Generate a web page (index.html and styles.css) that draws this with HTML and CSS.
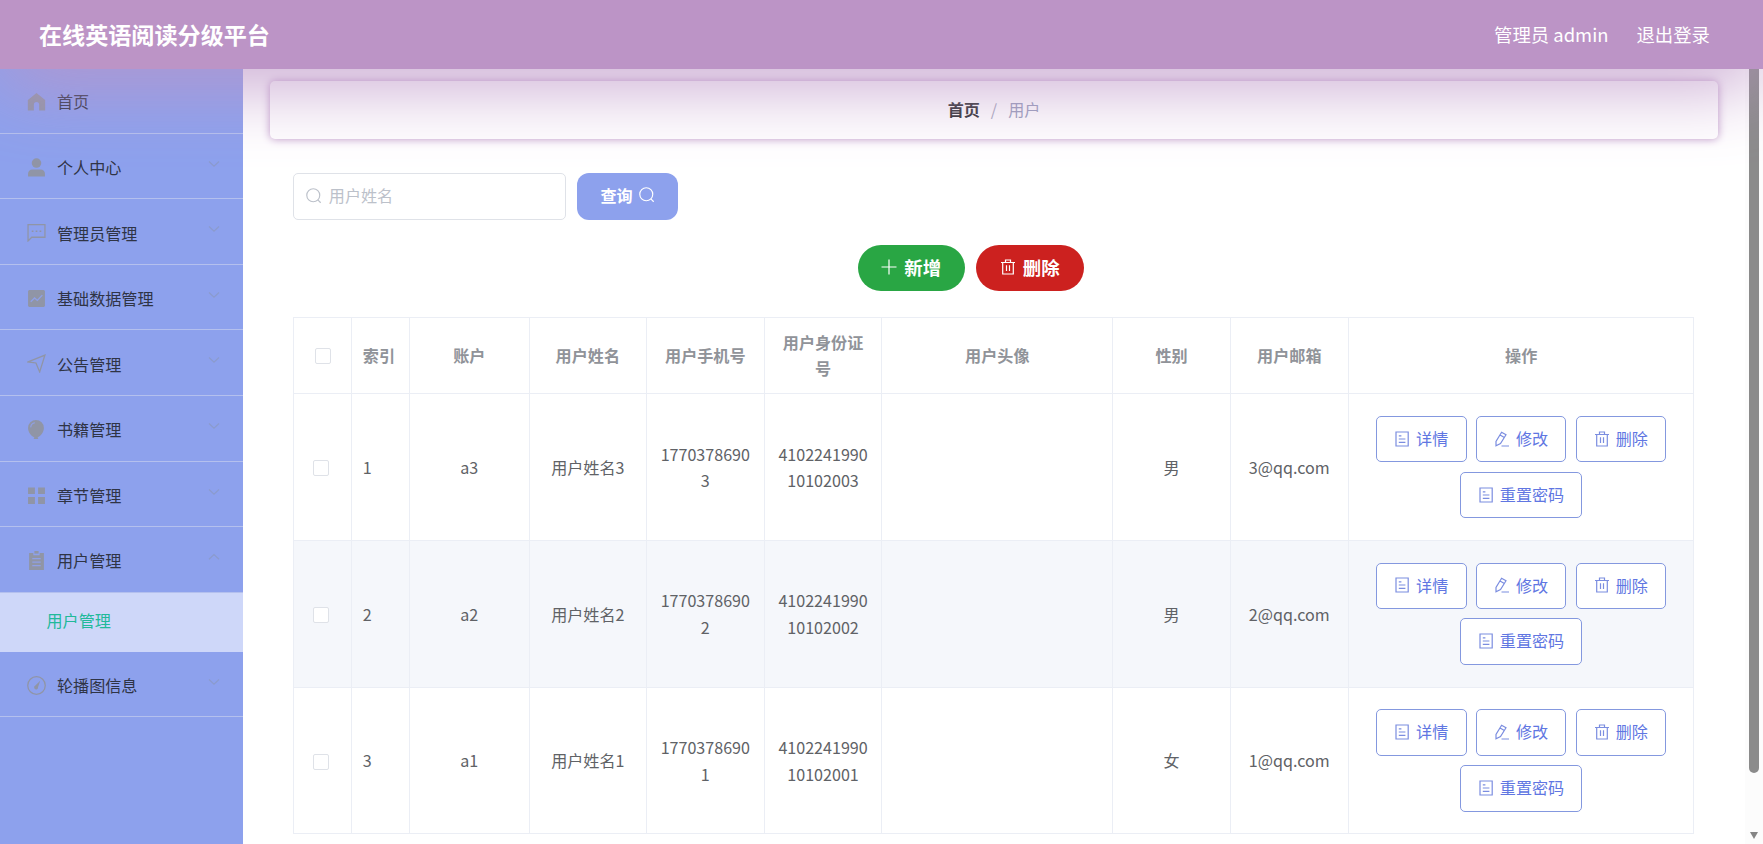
FILE: index.html
```html
<!DOCTYPE html>
<html lang="zh-CN">
<head>
<meta charset="utf-8">
<title>在线英语阅读分级平台</title>
<link rel="stylesheet" href="styles.css">
</head>
<body>
<svg width="0" height="0" class="sprite">
  <defs>
    <symbol id="home" viewBox="0 0 18 18"><path class="solid" d="M9 1 0.800 7.500v10h5.700V12a2.500 2.500 0 0 1 5 0v5.500h5.700v-10z"/></symbol>
    <symbol id="user" viewBox="0 0 18 18"><circle class="solid" cx="9" cy="4.800" r="4.500"/><path class="solid" d="M1 17.500V15a4 4 0 0 1 4-4h8a4 4 0 0 1 4 4v2.500z"/></symbol>
    <symbol id="chat" viewBox="0 0 18 18"><path class="line" d="M1 17V1.500h16v12H4.500z"/><path class="solid" d="M4.500 7h1.600v1.500H4.500zM8.200 7h1.600v1.500H8.200zM11.900 7h1.600v1.500h-1.600z"/></symbol>
    <symbol id="chart" viewBox="0 0 18 18"><path class="solid" d="M2 1h14l1 1v14l-1 1H2l-1-1V2z"/><path class="cut" d="m3.500 12 3.700-3.500 2.600 2.300 4.700-5"/></symbol>
    <symbol id="plane" viewBox="0 0 18 18"><path class="line" d="M1 7.500 17 1l-5 16-3.500-8.500z"/></symbol>
    <symbol id="balloon" viewBox="0 0 18 18"><path class="solid" d="M8.500 0a7.500 7.500 0 0 0-7.500 7.500c0 4 3 7.500 6 9L6.200 18h4.600l-.8-1.500c3-1.500 6-5 6-9A7.500 7.500 0 0 0 8.500 0z"/><path class="cut thin" d="M3.500 7a4.800 4.800 0 0 1 4-4.300"/></symbol>
    <symbol id="grid" viewBox="0 0 18 18"><path class="solid" d="M1 1.500h6.500v6H1zM10.500 1.500H17v6h-6.500zM1 10.500h6.500v6.500H1zM10.500 10.500H17V17h-6.500z"/></symbol>
    <symbol id="order" viewBox="0 0 18 18"><path class="solid" d="M2 2h4v2h6V2h4v16H2z"/><path class="solid" d="M7 0h4v2.500H7z"/><path class="cut" d="M5 7.200h8M5 10.500h8M5 13.800h8"/></symbol>
    <symbol id="guide" viewBox="0 0 18 18"><circle class="line" cx="9" cy="9" r="8.300"/><path class="solid" d="m12.500 4.500-2 6a1.900 1.900 0 1 1-2.600-1.400z"/></symbol>
    <symbol id="down" viewBox="0 0 12 8"><path class="line" d="m1 1.500 5 4.700 5-4.700"/></symbol>
    <symbol id="up" viewBox="0 0 12 8"><path class="line" d="m1 6.200 5-4.700 5 4.700"/></symbol>
    <symbol id="search" viewBox="0 0 16 16"><circle class="line" cx="7.500" cy="7.500" r="6.700"/><path class="line" d="m12.200 12.200 3 3"/></symbol>
    <symbol id="plus" viewBox="0 0 16 16"><path class="line" d="M8 .5v15M.5 8h15"/></symbol>
    <symbol id="trash" viewBox="0 0 16 16"><path class="line" d="M1 3.500h14M2.700 3.500v11.500h10.600v-11.500M5.500 3.500V1h5v2.500M6.500 6.300v5.700M9.500 6.300v5.700"/></symbol>
    <symbol id="doc" viewBox="0 0 16 16"><path class="line" d="M2 1h12.200v14H2zM4.800 4.800h2.600M4.800 8h6.600M4.800 11.300h6.600"/></symbol>
    <symbol id="edit" viewBox="0 0 16 16"><path class="line" d="M2 14.800 2 10.500 7.600 1.200l4.400 2.600-5.500 8.700zM6 3.900l4.400 2.600M7.500 15h7.500"/></symbol>
  </defs>
</svg>

<header class="header">
  <h1 class="brand">在线英语阅读分级平台</h1>
  <div class="account"><span>管理员 admin</span><span>退出登录</span></div>
</header>

<div class="body">
  <nav class="sidebar">
    <div class="item first"><svg class="icon"><use href="#home"/></svg><span>首页</span></div>
    <div class="item"><svg class="icon"><use href="#user"/></svg><span>个人中心</span><svg class="arrow"><use href="#down"/></svg></div>
    <div class="item"><svg class="icon"><use href="#chat"/></svg><span>管理员管理</span><svg class="arrow"><use href="#down"/></svg></div>
    <div class="item"><svg class="icon"><use href="#chart"/></svg><span>基础数据管理</span><svg class="arrow"><use href="#down"/></svg></div>
    <div class="item"><svg class="icon"><use href="#plane"/></svg><span>公告管理</span><svg class="arrow"><use href="#down"/></svg></div>
    <div class="item"><svg class="icon"><use href="#balloon"/></svg><span>书籍管理</span><svg class="arrow"><use href="#down"/></svg></div>
    <div class="item"><svg class="icon"><use href="#grid"/></svg><span>章节管理</span><svg class="arrow"><use href="#down"/></svg></div>
    <div class="item"><svg class="icon"><use href="#order"/></svg><span>用户管理</span><svg class="arrow"><use href="#up"/></svg></div>
    <div class="subitem">用户管理</div>
    <div class="item"><svg class="icon"><use href="#guide"/></svg><span>轮播图信息</span><svg class="arrow"><use href="#down"/></svg></div>
  </nav>

  <main class="main">
    <div class="breadcrumb"><b>首页</b><i>/</i><span>用户</span></div>
    <div class="search">
      <div class="input"><svg><use href="#search"/></svg><span>用户姓名</span></div>
      <div class="query"><span>查询</span><svg><use href="#search"/></svg></div>
    </div>
    <div class="actions">
      <div class="pill add"><svg><use href="#plus"/></svg><span>新增</span></div>
      <div class="pill remove"><svg><use href="#trash"/></svg><span>删除</span></div>
    </div>

    <div class="table">
      <div class="row head">
        <div class="check"><i></i></div><div class="index">索引</div><div>账户</div><div>用户姓名</div><div>用户手机号</div><div>用户身份证号</div><div>用户头像</div><div>性别</div><div>用户邮箱</div><div>操作</div>
      </div>
      <div class="row">
        <div class="check"><i></i></div><div class="index">1</div><div>a3</div><div>用户姓名3</div><div>17703786903</div><div>410224199010102003</div><div></div><div>男</div><div>3@qq.com</div>
        <div class="ops"><span class="btn"><svg><use href="#doc"/></svg>详情</span><span class="btn"><svg><use href="#edit"/></svg>修改</span><span class="btn"><svg><use href="#trash"/></svg>删除</span><span class="btn"><svg><use href="#doc"/></svg>重置密码</span></div>
      </div>
      <div class="row striped">
        <div class="check"><i></i></div><div class="index">2</div><div>a2</div><div>用户姓名2</div><div>17703786902</div><div>410224199010102002</div><div></div><div>男</div><div>2@qq.com</div>
        <div class="ops"><span class="btn"><svg><use href="#doc"/></svg>详情</span><span class="btn"><svg><use href="#edit"/></svg>修改</span><span class="btn"><svg><use href="#trash"/></svg>删除</span><span class="btn"><svg><use href="#doc"/></svg>重置密码</span></div>
      </div>
      <div class="row">
        <div class="check"><i></i></div><div class="index">3</div><div>a1</div><div>用户姓名1</div><div>17703786901</div><div>410224199010102001</div><div></div><div>女</div><div>1@qq.com</div>
        <div class="ops"><span class="btn"><svg><use href="#doc"/></svg>详情</span><span class="btn"><svg><use href="#edit"/></svg>修改</span><span class="btn"><svg><use href="#trash"/></svg>删除</span><span class="btn"><svg><use href="#doc"/></svg>重置密码</span></div>
      </div>
    </div>
  </main>

  <div class="scrollbar"><div class="thumb"></div><div class="caret"></div></div>
</div>
</body>
</html>
```
FILE: styles.css
```css
* { box-sizing: border-box; }

body {
  margin: 0;
  height: 844px;
  overflow: hidden;
  display: flex;
  flex-direction: column;
  background: #fff;
  color: #606266;
  font: 16.1px/26.5px "Noto Sans CJK SC", sans-serif;
}

svg { flex: none; overflow: visible; }
.sprite { position: absolute; }
.solid { fill: currentColor; }
.line { fill: none; stroke: currentColor; stroke-width: 1.2; }
.cut { fill: none; stroke: #8fa0e6; stroke-width: 1.3; }
.thin { stroke-width: 1; }

.header {
  position: relative;
  z-index: 5;
  flex: none;
  height: 69px;
  padding: 0 53px 0 39px;
  display: flex;
  align-items: center;
  justify-content: space-between;
  background: #bc94c6;
  box-shadow: 0 10px 80px #bc94c6;
  color: #fff;
}

.brand { margin: 0; font-size: 23.1px; font-weight: 700; }
.account { display: flex; gap: 28px; font-size: 18.4px; }

.body { flex: 1; min-height: 0; display: flex; }

.sidebar { flex: none; width: 243px; background: #8da1ed; color: #2f3445; }
.item {
  height: 65.55px;
  padding: 2.500px 22px 0 27px;
  display: flex;
  align-items: center;
  border-bottom: 1px solid #b4c0ee;
}
.item.first { height: 64.800px; padding-top: 1px; }
.item .icon { width: 19px; height: 19px; margin: 0 11px 0 0; color: #9095a6; }
.item .arrow { width: 12px; height: 8px; margin: -7px 1px 0 auto; color: #8b9bcd; }
.subitem {
  height: 59px;
  padding: 0 0 3px 46.500px;
  display: flex;
  align-items: center;
  background: #ced7f9;
  color: #21b99a;
}

.main { flex: 1; min-width: 0; padding: 12px 27px 0; }

.breadcrumb {
  height: 58px;
  padding-bottom: 2px;
  display: flex;
  align-items: center;
  justify-content: center;
  gap: 11px;
  border-radius: 5px;
  background: #fff;
  box-shadow: 0 0 8px #bc94c6;
}
.breadcrumb b { color: #303133; font-weight: 700; }
.breadcrumb i { color: #a9abc0; font-style: normal; }
.breadcrumb span { color: #999ebc; }

.search { display: flex; gap: 11px; margin: 34px 0 0 23.300px; }
.input {
  width: 273px;
  height: 46.500px;
  padding: 0 11.500px 2px;
  display: flex;
  align-items: center;
  gap: 7.500px;
  border: 1px solid #dfe2e8;
  border-radius: 5px;
  color: #bcc1ca;
}
.input svg, .query svg { width: 15.500px; height: 15.500px; }
.query {
  width: 101px;
  height: 46.500px;
  padding: 0 1px 3px 0;
  display: flex;
  align-items: center;
  justify-content: center;
  gap: 6px;
  border-radius: 12px;
  background: #8da1ed;
  color: #fff;
  font-weight: 700;
}

.actions { display: flex; gap: 11px; margin: 25px 0 0 587.500px; }
.pill {
  width: 107.500px;
  height: 46.500px;
  padding-bottom: 2px;
  display: flex;
  align-items: center;
  justify-content: center;
  gap: 7px;
  border-radius: 23px;
  color: #fff;
  font-size: 18.4px;
  font-weight: 700;
}
.pill svg { width: 16px; height: 16px; margin-top: 1px; }
.pill .line { stroke-width: 1.4; }
.add { background: #29a644; }
.remove { background: #cc211f; }

.table {
  width: 1401.200px;
  margin: 26px 0 0 23.300px;
  border-left: 1px solid #ebeef5;
  border-top: 1px solid #ebeef5;
}
.row {
  display: grid;
  grid-template-columns: 57.500px 58px 120px 117px 118px 117.500px 231px 117.500px 118px 1fr;
  height: 146.700px;
}
.row > div {
  padding: 0 11px;
  display: flex;
  align-items: center;
  justify-content: center;
  text-align: center;
  word-break: break-all;
  border-right: 1px solid #ebeef5;
  border-bottom: 1px solid #ebeef5;
}
.row .index { justify-content: flex-start; }
.row.head { height: 76.300px; color: #909399; font-weight: 700; }
.row.head > div { padding-bottom: 1px; }
.striped { background: #f5f7fb; }
.check i {
  width: 16px;
  height: 16px;
  margin-top: 2px;
  border: 1px solid #dfe2e8;
  border-radius: 2px;
  background: #fff;
}
.row:not(.head) .check { padding: 0 15px 0 11px; }

.row > .ops { padding-bottom: 0; flex-wrap: wrap; align-content: center; gap: 9.300px; }
.btn {
  height: 46.500px;
  padding: 0 17.300px 2px 17px;
  display: flex;
  align-items: center;
  gap: 6px;
  border: 1px solid #8498df;
  border-radius: 5px;
  background: #fff;
  color: #6076e2;
}
.btn svg { width: 16px; height: 16px; margin-top: 1px; color: #7b8de0; }

.scrollbar {
  flex: none;
  width: 18px;
  padding-left: 4px;
  display: flex;
  flex-direction: column;
  background: #fcfcfc;
}
.thumb { width: 10px; height: 703.500px; border-radius: 0 0 5px 5px; background: #8b8b8b; }
.caret {
  width: 8px;
  margin: 59px 0 0 1px;
  border: 4px solid transparent;
  border-top: 7px solid #858585;
  border-bottom: 0;
}
```
